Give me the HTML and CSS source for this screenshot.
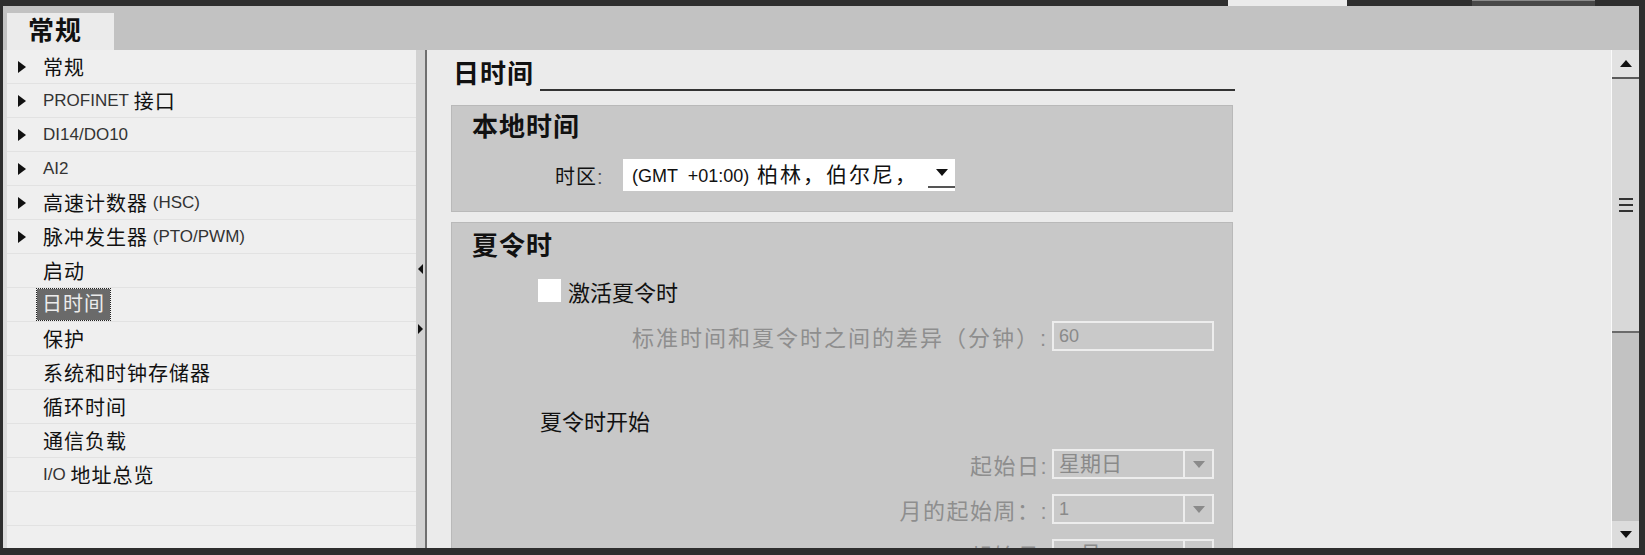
FILE: index.html
```html
<!DOCTYPE html>
<html>
  <head>
    <meta charset="UTF-8" />
    <title>常规 - 日时间</title>
    <link rel="stylesheet" href="styles.css">
  </head>

  <body>
    <div class="topstrip">
      <span class="top-tab-a"></span>
      <span class="top-tab-b"></span>
    </div>

    <div class="window">
      <div class="tabbar">
        <div class="tab">常规</div>
      </div>

      <div class="main">
        <!-- 左侧导航 -->
        <div class="nav">
          <div class="nav-item"><span class="arrow"></span>常规</div>
          <div class="nav-item"><span class="arrow"></span><span class="en">PROFINET&nbsp;</span>接口</div>
          <div class="nav-item"><span class="arrow"></span><span class="en">DI14/DO10</span></div>
          <div class="nav-item"><span class="arrow"></span><span class="en">AI2</span></div>
          <div class="nav-item"><span class="arrow"></span>高速计数器<span class="en">&nbsp;(HSC)</span></div>
          <div class="nav-item"><span class="arrow"></span>脉冲发生器<span class="en">&nbsp;(PTO/PWM)</span></div>
          <div class="nav-item"><span class="arrow none"></span>启动</div>
          <div class="nav-item"><span class="arrow none"></span><span class="sel">日时间</span></div>
          <div class="nav-item"><span class="arrow none"></span>保护</div>
          <div class="nav-item"><span class="arrow none"></span>系统和时钟存储器</div>
          <div class="nav-item"><span class="arrow none"></span>循环时间</div>
          <div class="nav-item"><span class="arrow none"></span>通信负载</div>
          <div class="nav-item"><span class="arrow none"></span><span class="en">I/O&nbsp;</span>地址总览</div>
          <div class="nav-item"></div>
          <div class="nav-item"></div>
        </div>

        <div class="splitter">
          <div class="grip">
            <span class="tri-l"></span>
            <span class="tri-r"></span>
          </div>
          <div class="line"></div>
        </div>

        <!-- 右侧内容 -->
        <div class="content">
          <div class="panel">
            <div class="page-title">
              <h1>日时间</h1>
              <span class="rule"></span>
            </div>

            <div class="group">
              <h2>本地时间</h2>
              <div class="tz-row">
                <span class="tz-label">时区<span class="colon">:</span></span>
                <div class="tz-select">
                  <span class="tz-text">(GMT  +01:00)<span class="cjk"> 柏林，伯尔尼，</span></span>
                  <span class="tz-btn"><span class="tri-down"></span></span>
                </div>
              </div>
            </div>

            <div class="group second">
              <h2>夏令时</h2>
              <div class="check-row">
                <span class="checkbox"></span>
                <span>激活夏令时</span>
              </div>

              <div class="field first">
                <span class="field-label wide">标准时间和夏令时之间的差异（分钟）:</span>
                <div class="box"><span class="val en">60</span></div>
              </div>

              <div class="sub-title">夏令时开始</div>

              <div class="field">
                <span class="field-label">起始日:</span>
                <div class="box">
                  <span class="val">星期日</span>
                  <span class="drop"><span class="tri-down gray"></span></span>
                </div>
              </div>
              <div class="field">
                <span class="field-label">月的起始周：:</span>
                <div class="box">
                  <span class="val en">1</span>
                  <span class="drop"><span class="tri-down gray"></span></span>
                </div>
              </div>
              <div class="field">
                <span class="field-label">起始月:</span>
                <div class="box">
                  <span class="val">一月</span>
                  <span class="drop"><span class="tri-down gray"></span></span>
                </div>
              </div>
            </div>
          </div>
        </div>

        <!-- 滚动条 -->
        <div class="vscroll">
          <div class="sb-btn sb-up"><span class="tri-up"></span></div>
          <div class="sb-thumb">
            <span class="grip-lines"><i></i><i></i><i></i></span>
          </div>
          <div class="sb-track"></div>
          <div class="sb-btn sb-down"><span class="tri-down"></span></div>
        </div>
      </div>
    </div>
  </body>
</html>
```

FILE: styles.css
```css
/* 整体框架 */
* {
  box-sizing: border-box;
}

body {
  margin: 0;
  background-color: #2e2e2e;
  font-family: "Liberation Sans", "Noto Sans CJK SC", sans-serif;
  color: #111;
  overflow: hidden;
}

.topstrip {
  height: 6px;
  display: flex;
}

.top-tab-a {
  margin-left: 1228px;
  width: 119px;
  background-color: #ebebeb;
}

.top-tab-b {
  margin-left: 125px;
  width: 123px;
  background-color: #484848;
  border-top: 1px solid #8a8a8a;
}

.window {
  margin: 0 6px 0 3px;
  height: 542px;
  display: flex;
  flex-direction: column;
  background-color: #dcdcdc;
}

/* 标签栏 */
.tabbar {
  height: 44px;
  flex: none;
  background-color: #c2c2c2;
  display: flex;
  align-items: flex-end;
  padding-left: 4px;
}

.tab {
  width: 107px;
  height: 37px;
  background-color: #ebebeb;
  font-size: 26px;
  font-weight: bold;
  line-height: 37px;
  padding-left: 21px;
  letter-spacing: 1px;
}

.main {
  flex: 1;
  display: flex;
  padding-left: 4px;
  min-height: 0;
}

/* 左侧导航 */
.nav {
  width: 409px;
  flex: none;
  background-color: #efefef;
  overflow: hidden;
}

.nav-item {
  height: 34px;
  border-bottom: 1px solid #e2e2e2;
  display: flex;
  align-items: center;
  padding-left: 11px;
  font-size: 20px;
  letter-spacing: 1px;
  white-space: nowrap;
}

.arrow {
  width: 0;
  height: 0;
  border-left: 8px solid #111;
  border-top: 6px solid transparent;
  border-bottom: 6px solid transparent;
  margin-right: 17px;
}

.arrow.none {
  border-left-color: transparent;
}

.en {
  font-size: 17px;
  letter-spacing: 0;
  color: #333;
}

.sel {
  background-color: #6a6a6a;
  color: #ececec;
  outline: 1px dotted #222;
  padding: 0 5px;
  margin-left: -6px;
  line-height: 31px;
}

/* 分隔条 */
.splitter {
  width: 11px;
  flex: none;
  display: flex;
}

.splitter .grip {
  width: 9px;
  background-color: #d2d2d2;
  display: flex;
  flex-direction: column;
  justify-content: center;
  align-items: center;
  gap: 50px;
}

.splitter .line {
  width: 2px;
  background-color: #6f6f6f;
}

.tri-l {
  border-right: 5px solid #111;
  border-top: 5px solid transparent;
  border-bottom: 5px solid transparent;
}

.tri-r {
  border-left: 5px solid #111;
  border-top: 5px solid transparent;
  border-bottom: 5px solid transparent;
}

/* 右侧内容 */
.content {
  flex: 1;
  background-color: #ebebeb;
  padding: 9px 0 0 24px;
  overflow: hidden;
}

.panel {
  width: 782px;
}

.page-title {
  display: flex;
  height: 32px;
  margin-bottom: 14px;
}

.page-title h1 {
  margin: 0;
  padding-left: 2px;
  font-size: 26px;
  line-height: 30px;
  letter-spacing: 1px;
}

.page-title .rule {
  flex: 1;
  border-bottom: 2px solid #333;
  margin-left: 6px;
  margin-right: -2px;
}

.group {
  background-color: #c8c8c8;
  border: 1px solid #b9b9b9;
  padding: 6px 20px 20px 20px;
}

.group.second {
  margin-top: 10px;
  padding-top: 8px;
  height: 400px;
}

.group h2 {
  margin: 0;
  font-size: 26px;
  line-height: 30px;
  letter-spacing: 1px;
}

.tz-row {
  display: flex;
  align-items: center;
  height: 32px;
  margin-top: 17px;
  padding-left: 83px;
}

.tz-label {
  width: 68px;
  font-size: 20px;
  letter-spacing: 1px;
}

.colon {
  color: #555;
}

.tz-select {
  width: 332px;
  height: 32px;
  background-color: #fff;
  display: flex;
}

.tz-text {
  flex: 1;
  overflow: hidden;
  white-space: pre;
  padding-left: 9px;
  font-size: 18px;
  line-height: 32px;
}

.tz-text .cjk {
  font-size: 21px;
  letter-spacing: 2px;
}

.tz-btn {
  width: 27px;
  display: flex;
  align-items: center;
  justify-content: center;
  border-bottom: 2px solid #555;
  margin-bottom: 3px;
}

.tri-down {
  border-top: 7px solid #111;
  border-left: 6px solid transparent;
  border-right: 6px solid transparent;
}

.tri-down.gray {
  border-top-color: #8a8a8a;
}

.tri-up {
  border-bottom: 7px solid #111;
  border-left: 6px solid transparent;
  border-right: 6px solid transparent;
}

.check-row {
  display: flex;
  align-items: center;
  height: 23px;
  margin-top: 18px;
  padding-left: 66px;
  font-size: 22px;
}

.checkbox {
  width: 23px;
  height: 23px;
  background-color: #fff;
  margin-right: 7px;
}

.field {
  display: flex;
  justify-content: flex-end;
  align-items: center;
  gap: 4px;
  height: 30px;
  margin-top: 15px;
  margin-right: -2px;
}

.field.first {
  margin-top: 19px;
}

.field-label {
  font-size: 22px;
  letter-spacing: 1.5px;
  color: #8e8e8e;
}

.field-label.wide {
  letter-spacing: 2px;
}

.box {
  width: 162px;
  height: 30px;
  border: 2px solid #ededed;
  background-color: #c9c9c9;
  display: flex;
  color: #8a8a8a;
}

.box .val {
  flex: 1;
  font-size: 21px;
  line-height: 26px;
  padding-left: 5px;
  color: #8a8a8a;
}

.box .val.en {
  font-size: 18px;
}

.box .drop {
  width: 29px;
  border-left: 2px solid #ededed;
  display: flex;
  align-items: center;
  justify-content: center;
}

.sub-title {
  margin-top: 61px;
  padding-left: 68px;
  font-size: 22px;
  line-height: 22px;
}

/* 滚动条 */
.vscroll {
  width: 28px;
  flex: none;
  border-left: 1px solid #fafafa;
  background-color: #c2c2c2;
  display: flex;
  flex-direction: column;
}

.sb-btn {
  height: 27px;
  flex: none;
  background-color: #e2e2e2;
  display: flex;
  align-items: center;
  justify-content: center;
}

.sb-up {
  height: 29px;
  border-bottom: 2px solid #5a5a5a;
}

.sb-thumb {
  height: 254px;
  flex: none;
  background-color: #d8d8d8;
  border-bottom: 2px solid #6a6a6a;
  display: flex;
  align-items: center;
  justify-content: center;
}

.grip-lines {
  display: flex;
  flex-direction: column;
  gap: 4px;
}

.grip-lines i {
  display: block;
  width: 14px;
  height: 2px;
  background-color: #333;
}

.sb-track {
  flex: 1;
}

.sb-down {
  background-color: #dcdcdc;
}
```
